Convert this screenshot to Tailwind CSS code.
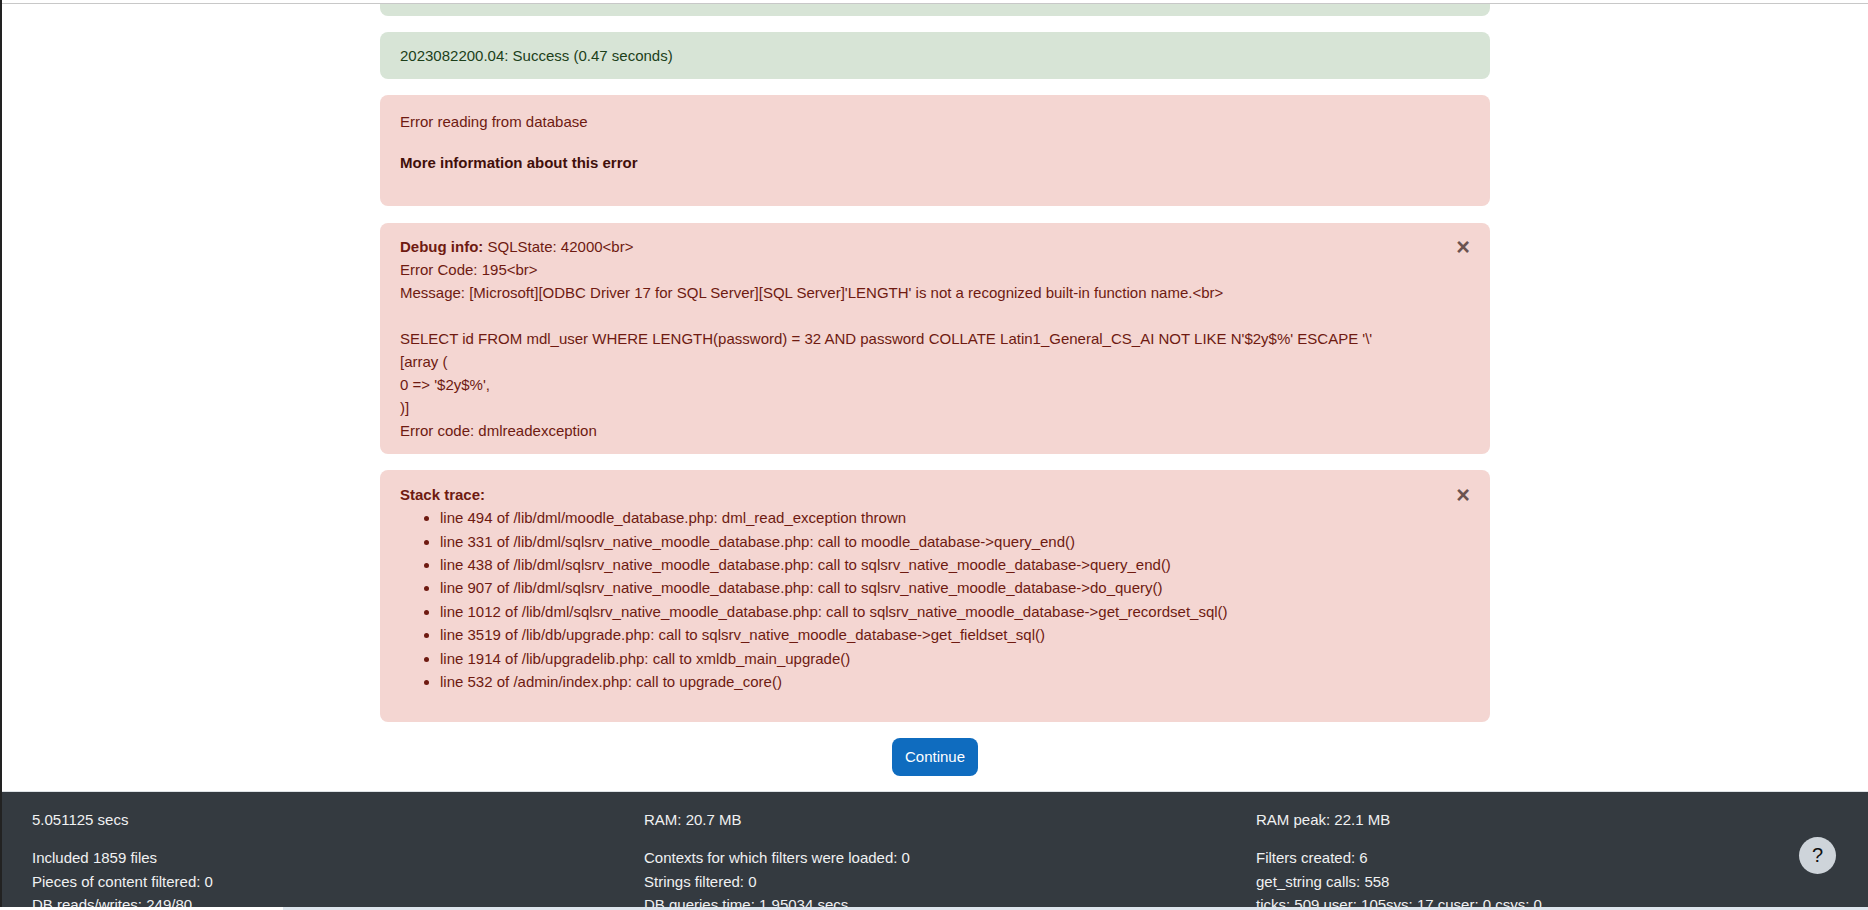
<!DOCTYPE html>
<html lang="en">

<head>
    <meta charset="UTF-8">
    <meta name="viewport" content="width=device-width, initial-scale=1.0">
    <script src="https://cdn.jsdelivr.net/npm/@tailwindcss/browser@4"></script>
    <title>Upgrade</title>
</head>

<body class="h-[910px] overflow-hidden bg-white font-['Liberation_Sans',sans-serif] text-[15px] leading-[23.4px]">
    <div class="relative flex h-[907px] flex-col overflow-hidden border-l-2 border-[#222]">
        <div class="h-[4px] shrink-0 border-b border-[#c8c8c8] bg-white"></div>

        <!-- Upgrade results -->
        <main class="mx-auto flex h-[787px] w-[1110px] shrink-0 flex-col gap-[16.2px]">
            <div class="h-[11.6px] shrink-0 rounded-b-lg bg-[#d7e4d6]"></div>
            <div class="rounded-lg bg-[#d7e4d6] px-5 py-3 text-[#1c3f1a]">2023082200.04: Success (0.47 seconds)</div>

            <div class="h-[111px] shrink-0 rounded-lg bg-[#f4d6d2] px-5 pt-[15px] text-[#6e1a11]">
                <p>Error reading from database</p>
                <p class="mt-[17px] font-bold text-[#410f0a]">More information about this error</p>
            </div>

            <div class="relative rounded-lg bg-[#f4d6d2] px-5 py-3 leading-[23px] text-[#6e1a11]">
                <button class="absolute right-[20px] top-[13px] text-[23.4px] font-bold leading-[23.4px] text-[#6b5350]">&times;</button>
                <p><b>Debug info:</b> SQLState: 42000&lt;br&gt;</p>
                <p>Error Code: 195&lt;br&gt;</p>
                <p>Message: [Microsoft][ODBC Driver 17 for SQL Server][SQL Server]'LENGTH' is not a recognized built-in function name.&lt;br&gt;</p>
                <p class="mt-[23px]">SELECT id FROM mdl_user WHERE LENGTH(password) = 32 AND password COLLATE Latin1_General_CS_AI NOT LIKE N'$2y$%' ESCAPE '\'</p>
                <p>[array (</p>
                <p>0 =&gt; '$2y$%',</p>
                <p>)]</p>
                <p>Error code: dmlreadexception</p>
            </div>

            <div class="relative h-[252px] shrink-0 rounded-lg bg-[#f4d6d2] px-5 pt-[13px] text-[#6e1a11]">
                <button class="absolute right-[20px] top-[14px] text-[23.4px] font-bold leading-[23.4px] text-[#6b5350]">&times;</button>
                <p class="font-bold">Stack trace:</p>
                <ul class="list-disc pl-10">
                    <li>line 494 of /lib/dml/moodle_database.php: dml_read_exception thrown</li>
                    <li>line 331 of /lib/dml/sqlsrv_native_moodle_database.php: call to moodle_database-&gt;query_end()</li>
                    <li>line 438 of /lib/dml/sqlsrv_native_moodle_database.php: call to sqlsrv_native_moodle_database-&gt;query_end()</li>
                    <li>line 907 of /lib/dml/sqlsrv_native_moodle_database.php: call to sqlsrv_native_moodle_database-&gt;do_query()</li>
                    <li>line 1012 of /lib/dml/sqlsrv_native_moodle_database.php: call to sqlsrv_native_moodle_database-&gt;get_recordset_sql()</li>
                    <li>line 3519 of /lib/db/upgrade.php: call to sqlsrv_native_moodle_database-&gt;get_fieldset_sql()</li>
                    <li>line 1914 of /lib/upgradelib.php: call to xmldb_main_upgrade()</li>
                    <li>line 532 of /admin/index.php: call to upgrade_core()</li>
                </ul>
            </div>

            <div class="flex justify-center">
                <button class="h-[38px] w-[86px] rounded-lg bg-[#0f6cbf] pb-px text-white">Continue</button>
            </div>
        </main>

        <!-- Performance footer -->
        <footer class="grid flex-1 grid-cols-[612px_612px_1fr] border-t border-[#dee2e6] bg-[#343a40] pl-[30px] pt-[16px] text-[#f0f1f2]">
            <div>
                <p class="mb-[15px]">5.051125 secs</p>
                <p>Included 1859 files</p>
                <p>Pieces of content filtered: 0</p>
                <p>DB reads/writes: 249/80</p>
            </div>
            <div>
                <p class="mb-[15px]">RAM: 20.7 MB</p>
                <p>Contexts for which filters were loaded: 0</p>
                <p>Strings filtered: 0</p>
                <p>DB queries time: 1.95034 secs</p>
            </div>
            <div>
                <p class="mb-[15px]">RAM peak: 22.1 MB</p>
                <p>Filters created: 6</p>
                <p>get_string calls: 558</p>
                <p>ticks: 509 user: 105sys: 17 cuser: 0 csys: 0</p>
            </div>
        </footer>

        <button class="absolute right-[32px] top-[837px] h-[37px] w-[37px] rounded-full bg-[#ced4da] text-[20px] text-[#111]">?</button>
    </div>

    <!-- Window edge at the bottom -->
    <div class="flex h-[3px]">
        <div class="w-[283px] bg-white"></div>
        <div class="flex-1 bg-[#dde5ed]"></div>
    </div>
</body>

</html>
